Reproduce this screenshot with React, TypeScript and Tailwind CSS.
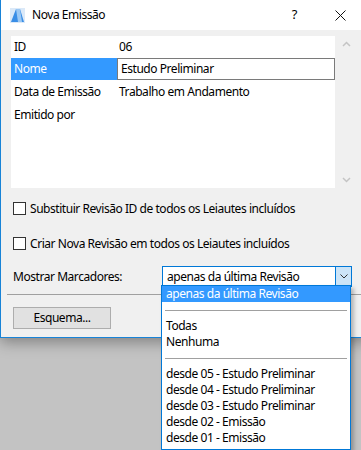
import React from "react";

const font = { fontFamily: '"Noto Sans", "Liberation Sans", sans-serif', letterSpacing: "-0.45px" };

const rows = [
  { label: "ID", value: "06" },
  { label: "Nome", value: "Estudo Preliminar", edit: true },
  { label: "Data de Emissão", value: "Trabalho em Andamento" },
  { label: "Emitido por", value: "" },
];

const options = [
  "desde 05 - Estudo Preliminar",
  "desde 04 - Estudo Preliminar",
  "desde 03 - Estudo Preliminar",
  "desde 02 - Emissão",
  "desde 01 - Emissão",
];

const AppIcon = () => (
  <svg width="15" height="15" viewBox="0 0 15 15">
    <rect x="0" y="0" width="15" height="15" fill="#dbe9f8" />
    <path d="M1 14 L6 1 L10 1 L14 14 Z" fill="#3a8ee6" />
    <path d="M6 1 L10 1 L12 14 L8 14 Z" fill="#9cc8f3" />
  </svg>
);

const Checkbox = ({ label }: { label: string }) => (
  <div className="flex items-center h-[13px] pl-[12px]">
    <div className="w-[13px] h-[13px] border border-[#333] bg-white" />
    <span className="ml-[4px] text-[12px] leading-none text-black">{label}</span>
  </div>
);

export default function App() {
  return (
    <div className="relative w-[361px] h-[450px] bg-[#c3c3c3] overflow-hidden" style={font}>
      <div className="w-[370px] h-[338px] bg-[#f0f0f0] border-l border-b border-[#1883d7] shadow-[0_4px_14px_rgba(0,0,0,0.35)] flex flex-col">
        {/* title bar */}
        <div className="h-[30px] bg-white flex items-center shrink-0">
          <div className="ml-[9px]">
            <AppIcon />
          </div>
          <span className="ml-[7px] text-[12px] text-black">Nova Emissão</span>
          <div className="flex-1" />
          <span className="text-[13px] text-black">?</span>
          <svg className="ml-[38px] mr-[24px]" width="11" height="11" viewBox="0 0 11 11">
            <path d="M0.5 0.5 L10.5 10.5 M10.5 0.5 L0.5 10.5" stroke="#111" strokeWidth="1" />
          </svg>
        </div>

        {/* properties table */}
        <div className="flex mt-[6px] ml-[10px] h-[152px]">
          <div className="w-[324px] bg-white flex flex-col text-[12px] text-black">
            {rows.map((r, i) => (
              <div key={r.label} className={`flex items-center ${i < 2 ? "h-[22px]" : "h-[23px]"}`}>
                <div
                  className={`w-[106px] h-full flex items-center pl-[3px] ${
                    r.edit ? "bg-[#3399ff] text-white" : ""
                  }`}
                >
                  {r.label}
                </div>
                {r.edit ? (
                  <div className="flex-1 h-full border border-[#7a7a7a] flex items-center pl-[3px]">
                    {r.value}
                  </div>
                ) : (
                  <div className="pl-[2px]">{r.value}</div>
                )}
              </div>
            ))}
          </div>
          <div className="w-[22px] flex flex-col items-center justify-between py-[5px]">
            <svg width="9" height="6" viewBox="0 0 9 6">
              <path d="M1 5 L4.5 1.5 L8 5" stroke="#c4c4c4" strokeWidth="1.5" fill="none" />
            </svg>
            <svg width="9" height="6" viewBox="0 0 9 6">
              <path d="M1 1 L4.5 4.5 L8 1" stroke="#c4c4c4" strokeWidth="1.5" fill="none" />
            </svg>
          </div>
        </div>

        <div className="mt-[14px]">
          <Checkbox label="Substituir Revisão ID de todos os Leiautes incluídos" />
        </div>
        <div className="mt-[22px]">
          <Checkbox label="Criar Nova Revisão em todos os Leiautes incluídos" />
        </div>

        {/* markers */}
        <div className="flex items-center mt-[16px] h-[21px]">
          <span className="ml-[12px] w-[149px] text-[12px] text-black">Mostrar Marcadores:</span>
          <div className="w-[190px] h-[21px] border border-[#0078d7] bg-white flex items-center">
            <span className="flex-1 pl-[4px] text-[12px] text-black">apenas da última Revisão</span>
            <div className="w-[16px] h-full bg-[#cce4f7] border-l border-[#0078d7] flex items-center justify-center">
              <svg width="8" height="5" viewBox="0 0 8 5">
                <path d="M0.5 0.5 L4 4 L7.5 0.5" stroke="#333" strokeWidth="1" fill="none" />
              </svg>
            </div>
          </div>
        </div>

        <div className="ml-[6px] mt-[7px] h-px bg-[#a0a0a0]" />

        <div className="ml-[12px] mt-[12px] w-[98px] h-[22px] bg-[#e1e1e1] border border-[#adadad] flex items-center justify-center text-[12px] text-black">
          Esquema...
        </div>
      </div>

      {/* open dropdown list */}
      <div className="absolute left-[161px] top-[285px] w-[190px] h-[165px] bg-white border border-[#0078d7] shadow-[3px_3px_4px_rgba(0,0,0,0.25)] text-[12px] text-black flex flex-col">
        <div className="h-[16px] bg-[#3399ff] text-white pl-[4px] flex items-center">apenas da última Revisão</div>
        <div className="h-[16px] flex items-center px-[3px]">
          <div className="w-full h-px bg-[#a0a0a0]" />
        </div>
        <div className="h-[16px] pl-[4px] flex items-center">Todas</div>
        <div className="h-[16px] pl-[4px] flex items-center">Nenhuma</div>
        <div className="h-[16px] flex items-center px-[3px]">
          <div className="w-full h-px bg-[#a0a0a0]" />
        </div>
        {options.map((o) => (
          <div key={o} className="h-[16px] pl-[4px] flex items-center">
            {o}
          </div>
        ))}
      </div>
    </div>
  );
}
